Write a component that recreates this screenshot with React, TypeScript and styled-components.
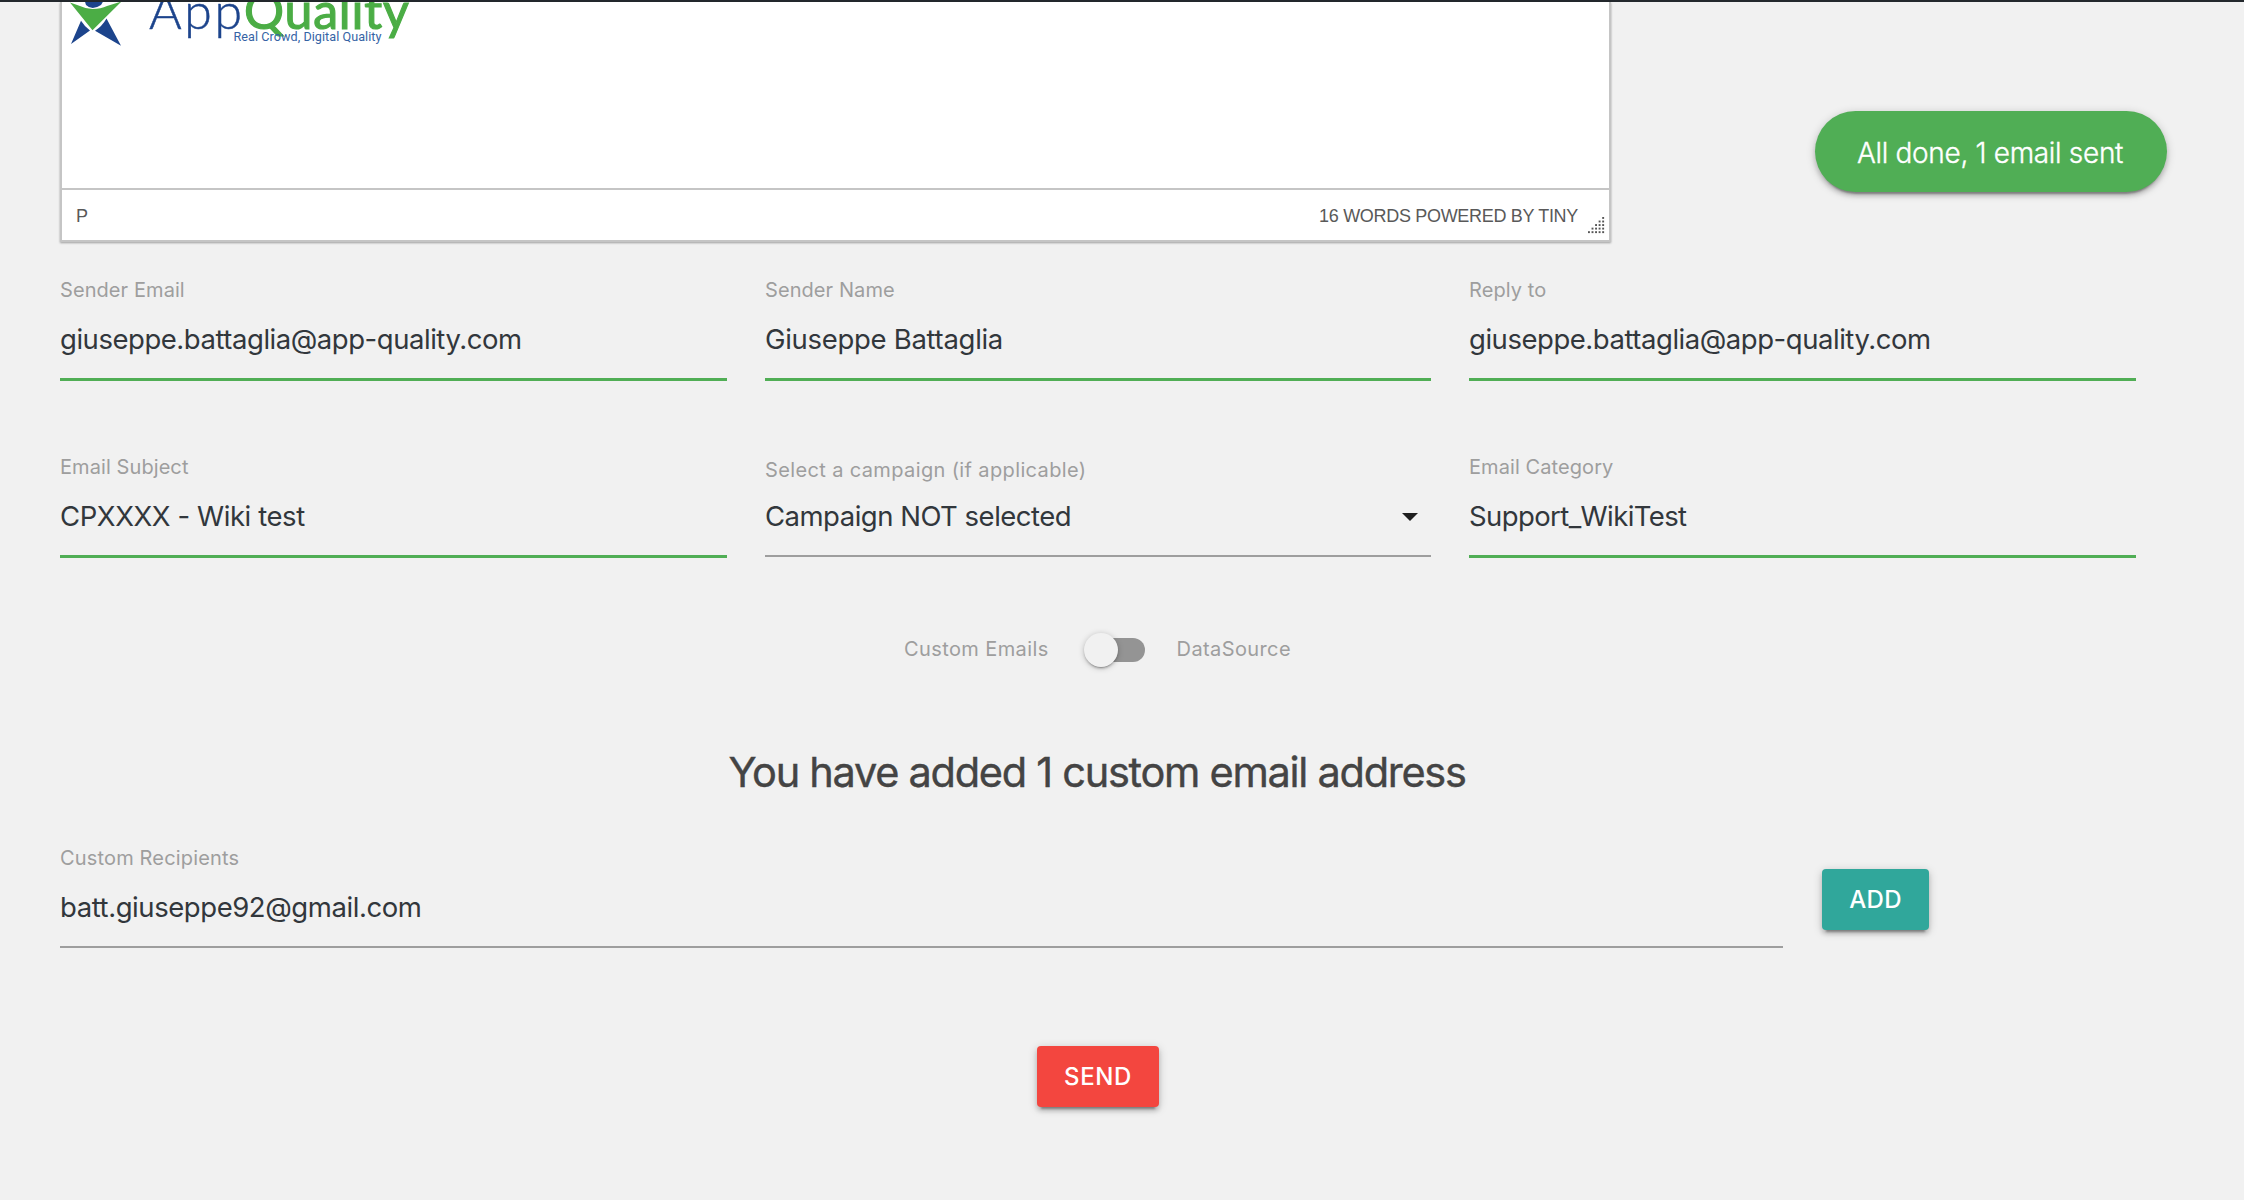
import React from 'react';
import styled, { createGlobalStyle } from 'styled-components';

const GlobalStyle = createGlobalStyle`
  *, *::before, *::after { box-sizing: border-box; }
  html { background: #f1f1f1; }
  body {
    margin: 0;
    background: #f1f1f1;
    font-family: Inter, "Noto Sans", sans-serif;
    overflow: hidden;
  }
`;

const Page = styled.div`
  position: relative;
  height: 1200px;
  border-top: 2px solid #23282d;
  background: #f1f1f1;
`;

const Main = styled.main`
  width: 2076px;
  margin-left: 60px;
  display: flex;
  flex-direction: column;
`;

const Editor = styled.section`
  width: 1551px;
  height: 240px;
  display: flex;
  flex-direction: column;
  background: #fff;
  border: 2px solid #c5c5c5;
  border-top: 0;
  box-shadow: 0 1px 2px rgba(0, 0, 0, 0.35);
`;

const EditorBody = styled.div`
  flex: 1;
`;

const Logo = styled.svg`
  display: block;
`;

const StatusBar = styled.div`
  height: 52px;
  display: flex;
  align-items: center;
  border-top: 2px solid #c5c5c5;
  padding: 2px 4px 0 14px;
  font-family: "Liberation Sans", Arial, sans-serif;
  font-size: 18px;
  line-height: 22px;
  color: #595959;
`;

const WordCount = styled.span`
  margin-left: auto;
  letter-spacing: -0.31px;
`;

const ResizeHandle = styled.svg`
  align-self: flex-end;
  margin: 0 0 6px 10px;
`;

const FieldGrid = styled.div`
  display: grid;
  grid-template-columns: 667px 666px 667px;
  column-gap: 38px;
  row-gap: 74px;
  margin-top: 36px;
`;

const FieldBox = styled.div<{ $width?: number }>`
  display: flex;
  flex-direction: column;
  width: ${(p) => (p.$width ? `${p.$width}px` : 'auto')};
`;

const FieldLabel = styled.label<{ $select?: boolean; $track: number }>`
  font-size: 20px;
  line-height: 24px;
  color: #9e9e9e;
  letter-spacing: ${(p) => p.$track}px;
  margin: ${(p) => (p.$select ? '3px 0 14px' : '0 0 17px')};
`;

const FieldValue = styled.div<{ $valid?: boolean; $track: number }>`
  display: flex;
  align-items: center;
  justify-content: space-between;
  padding-bottom: 19px;
  border-bottom: ${(p) => (p.$valid ? '3px solid #50ae55' : '2px solid #9e9e9e')};
  font-size: 27.5px;
  line-height: 40px;
  color: #32373c;
  letter-spacing: ${(p) => p.$track}px;
`;

const Caret = styled.span`
  margin: 2px 13px 0 0;
  border: 8px solid transparent;
  border-top-color: #1f1f1f;
  border-bottom-width: 0;
`;

const SwitchRow = styled.div`
  height: 34px;
  margin: 75px 1px 0 0;
  display: flex;
  justify-content: center;
  align-items: flex-start;
  font-size: 20px;
  line-height: 32px;
  letter-spacing: 0.39px;
  color: #9e9e9e;
`;

const Track = styled.span`
  width: 57px;
  height: 24px;
  margin: 5px 32px 0 39px;
  display: flex;
  align-items: center;
  border-radius: 12px;
  background: #949494;
`;

const Knob = styled.span`
  flex: none;
  width: 34px;
  height: 34px;
  margin-left: -4px;
  border-radius: 50%;
  background: #f1f1f1;
  box-shadow: 0 3px 1px -2px rgba(0, 0, 0, 0.2), 0 2px 2px 0 rgba(0, 0, 0, 0.14),
    0 1px 6px 0 rgba(0, 0, 0, 0.22);
`;

const Heading = styled.h5`
  margin: 79px 2px 0 0;
  text-align: center;
  font-size: 41.5px;
  font-weight: 400;
  line-height: 52px;
  letter-spacing: -1.28px;
  color: #444;
  -webkit-text-stroke: 0.4px #444;
`;

const Recipients = styled.div`
  display: flex;
  align-items: flex-start;
  margin-top: 48px;
`;

const Button = styled.button<{ $color: string; $width: number; $track: number }>`
  width: ${(p) => p.$width}px;
  height: 61px;
  padding: 0;
  border: 0;
  border-radius: 4px;
  background: ${(p) => p.$color};
  color: #fff;
  font: 500 24px/40px Inter, sans-serif;
  letter-spacing: ${(p) => p.$track}px;
  box-shadow: 0 4px 4px 0 rgba(0, 0, 0, 0.14), 0 6px 2px -4px rgba(0, 0, 0, 0.3),
    0 2px 10px 0 rgba(0, 0, 0, 0.2);
`;

const AddSlot = styled.div`
  margin: 23px 0 0 39px;
`;

const SendRow = styled.div`
  display: flex;
  justify-content: center;
  margin-top: 98px;
`;

const Toast = styled.div`
  position: absolute;
  top: 109px;
  left: 1815px;
  width: 352px;
  height: 81px;
  padding: 2px 0 0 42px;
  display: flex;
  align-items: center;
  border-radius: 41px;
  background: #50ae55;
  color: #fff;
  font-size: 28px;
  font-weight: 300;
  letter-spacing: -0.32px;
  white-space: nowrap;
  -webkit-text-stroke: 0.35px #fff;
  box-shadow: 0 4px 4px 0 rgba(0, 0, 0, 0.14), 0 6px 2px -4px rgba(0, 0, 0, 0.3),
    0 2px 10px 0 rgba(0, 0, 0, 0.2);
`;

type FieldProps = {
  label: string;
  value: string;
  valid?: boolean;
  select?: boolean;
  width?: number;
  labelTrack?: number;
  track?: number;
};

function Field({ label, value, valid, select, width, labelTrack = 0.08, track = -0.46 }: FieldProps) {
  return (
    <FieldBox $width={width}>
      <FieldLabel $select={select} $track={labelTrack}>{label}</FieldLabel>
      <FieldValue $valid={valid} $track={track}>
        <span>{value}</span>
        {select && <Caret />}
      </FieldValue>
    </FieldBox>
  );
}

const fields: FieldProps[] = [
  { label: 'Sender Email', value: 'giuseppe.battaglia@app-quality.com', valid: true },
  { label: 'Sender Name', value: 'Giuseppe Battaglia', valid: true, track: -0.3 },
  { label: 'Reply to', value: 'giuseppe.battaglia@app-quality.com', valid: true },
  { label: 'Email Subject', value: 'CPXXXX - Wiki test', valid: true, track: -0.42 },
  {
    label: 'Select a campaign (if applicable)',
    value: 'Campaign NOT selected',
    select: true,
    labelTrack: 0.37,
    track: -0.5,
  },
  { label: 'Email Category', value: 'Support_WikiTest', valid: true, track: -0.6 },
];

function BrandLogo() {
  return (
    <Logo width="380" height="48" viewBox="62 2 380 48" aria-label="AppQuality">
      <path d="M84.500 0H104L101 5Q92 11 86 5Z" fill="#1c448c" />
      <path d="M70 2.500L80 6Q86 9 92.500 9Q101 9 107 6L121.500 1.500L92.500 30.300Z" fill="#4bad45" />
      <path d="M81 20.700Q85 27 90 30.500L71 44Z" fill="#1c448c" />
      <path d="M106.500 18.500Q102 26.500 95 30.700L121 45.700Z" fill="#1c448c" />
      <g fontFamily="Lato, sans-serif" fontSize="50">
        <text x="149" y="29" fontWeight="300" fill="#1c448c" stroke="#1c448c" strokeWidth="0.5" letterSpacing="2.6">App</text>
        <text x="244" y="28.500" fontWeight="400" fill="#4bad45" stroke="#4bad45" strokeWidth="1.2" letterSpacing="0.8">
          Quality
        </text>
      </g>
      <text x="233.500" y="40.500" fontFamily="Roboto, sans-serif" fontSize="12.6" letterSpacing="0.06" fill="#3563a5">
        Real Crowd, Digital Quality
      </text>
    </Logo>
  );
}

function Handle() {
  const dots: React.ReactNode[] = [];
  for (let row = 0; row < 5; row++) {
    for (let col = 4 - row; col < 5; col++) {
      dots.push(<rect key={`${row}-${col}`} x={col * 3.55} y={row * 3.55} width="1.900" height="1.900" fill="#555" />);
    }
  }
  return <ResizeHandle width="17" height="17">{dots}</ResizeHandle>;
}

export default function App() {
  return (
    <Page>
      <GlobalStyle />
      <Main>
        <Editor>
          <EditorBody>
            <BrandLogo />
          </EditorBody>
          <StatusBar>
            <span>P</span>
            <WordCount>16 WORDS POWERED BY TINY</WordCount>
            <Handle />
          </StatusBar>
        </Editor>

        <FieldGrid>
          {fields.map((f) => (
            <Field key={f.label} {...f} />
          ))}
        </FieldGrid>

        <SwitchRow>
          <span>Custom Emails</span>
          <Track>
            <Knob />
          </Track>
          <span>DataSource</span>
        </SwitchRow>

        <Heading>You have added 1 custom email address</Heading>

        <Recipients>
          <Field label="Custom Recipients" value="batt.giuseppe92@gmail.com" width={1723} labelTrack={0.16} track={-0.43} />
          <AddSlot>
            <Button $color="#30a79b" $width={107} $track={0.35}>ADD</Button>
          </AddSlot>
        </Recipients>

        <SendRow>
          <Button $color="#f3463f" $width={122} $track={0.62}>SEND</Button>
        </SendRow>
      </Main>
      <Toast>All done, 1 email sent</Toast>
    </Page>
  );
}
